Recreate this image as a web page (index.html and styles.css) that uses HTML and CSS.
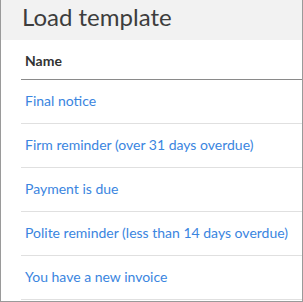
FILE: index.html
```html
<!DOCTYPE html>
<html lang="en">
<head>
    <meta charset="UTF-8">
    <meta name="viewport" content="width=device-width, initial-scale=1.0">
    <title>Load template</title>
    <link rel="stylesheet" href="styles.css">
</head>
<body>
<div class="dialog">
    <div class="dialog-head">
        <h1 class="dialog-title">Load template</h1>
    </div>
    <div class="dialog-body">
        <table class="templates">
            <thead>
                <tr><th>Name</th></tr>
            </thead>
            <tbody>
                <tr><td><a href="#">Final notice</a></td></tr>
                <tr><td><a href="#">Firm reminder (over 31 days overdue)</a></td></tr>
                <tr><td><a href="#">Payment is due</a></td></tr>
                <tr><td><a href="#">Polite reminder (less than 14 days overdue)</a></td></tr>
                <tr><td><a href="#">You have a new invoice</a></td></tr>
            </tbody>
        </table>
    </div>
</div>
</body>
</html>
```
FILE: styles.css
```css
*{
  margin: 0;
  padding: 0;
  box-sizing: border-box;
}
body{
  font-family: Lato, "Open Sans", sans-serif;
  background: #fff;
}
.dialog{
  width: 303px;
  height: 302px;
  border: 1px solid #9a9a9a;
  border-top: none;
  overflow: hidden;
}
.dialog-head{
  background: #f2f2f2;
  height: 40px;
  padding-left: 21px;
}
.dialog-title{
  font-weight: 400;
  font-size: 24px;
  line-height: 34px;
  color: #3d3d3d;
}
.dialog-body{
  padding-left: 20px;
}
.templates{
  width: 100%;
  border-collapse: collapse;
  font-size: 14px;
}
.templates th{
  text-align: left;
  font-weight: 700;
  color: #333;
  height: 39px;
  padding: 3px 4px 0;
  border-bottom: 1px solid #8a8a8a;
}
.templates td{
  height: 44px;
  padding: 0 4px 2px;
  border-bottom: 1px solid #e0e0e0;
}
.templates a{
  color: #3a85e0;
  text-decoration: none;
}
```
